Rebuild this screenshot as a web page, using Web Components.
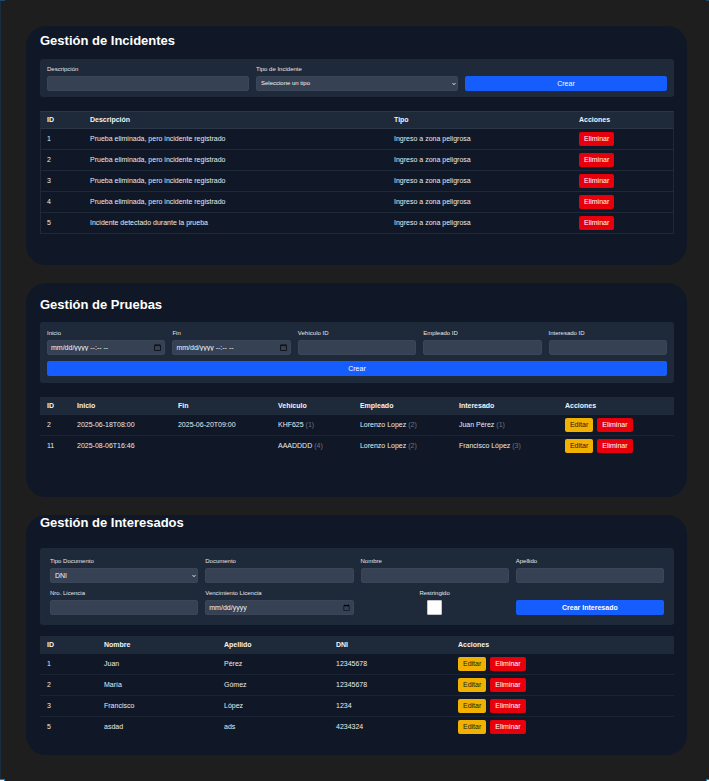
<!DOCTYPE html>
<html lang="es">
<head>
<meta charset="utf-8">
<title>Gestión</title>
<style>
  html { background: #1e1e1e; }
  body { margin: 0; font-family: "Liberation Sans", Arial, sans-serif; color: #e9ebef; font-size: 7px; }
</style>
</head>
<body>
<panel-board>
  <admin-card heading="Gestión de Incidentes" class="incidentes">
    <incident-form slot="form"></incident-form>
    <data-grid kind="incidentes"></data-grid>
  </admin-card>
  <admin-card heading="Gestión de Pruebas" class="pruebas">
    <test-form slot="form"></test-form>
    <data-grid kind="pruebas"></data-grid>
  </admin-card>
  <admin-card heading="Gestión de Interesados" class="interesados">
    <person-form slot="form"></person-form>
    <data-grid kind="interesados"></data-grid>
  </admin-card>
</panel-board>

<script>
const define = (name, html, setup) => customElements.define(name, class extends HTMLElement {
  connectedCallback() {
    if (this.shadowRoot) return;
    this.attachShadow({ mode: 'open' }).innerHTML = html;
    if (setup) setup(this, this.shadowRoot);
  }
});

/* Page frame with selection handles in its corners */
define('panel-board', `
  <style>
    :host { display: flex; flex-direction: column; gap: 18px; position: relative; box-sizing: border-box;
      min-height: 100vh; padding: 26px 22px 26px 25px; border-left: 1px solid #1b2d3d; border-bottom: 1px solid #17171a; }
    i { position: absolute; box-sizing: border-box; width: 5px; }
    .tl { left: -1px; top: 0; height: 1px; background: #1c4a6b; }
    .tr { right: 0; top: 0; width: 3px; height: 1px; background: #1c4a6b; }
    .bl, .br { bottom: -1px; height: 3px; background: #e8f2fa; border: 1px solid #1b7fc4; border-bottom: 0; border-left: 0; }
    .bl { left: -1px; }
    .br { right: 0; width: 3px; border: 1px solid #1b7fc4; border-bottom: 0; border-right: 0; }
  </style>
  <slot></slot><i class="tl"></i><i class="tr"></i><i class="bl"></i><i class="br"></i>`);

define('admin-card', `
  <style>
    :host { display: block; background: #101828; border-radius: 20px; padding: 0 13px 0 14px; --gap: 10px; --after: 14px; }
    :host(.incidentes) { padding-top: 7px; padding-bottom: 31px; }
    :host(.pruebas) { padding-top: 14px; padding-bottom: 40px; --gap: 9px; }
    :host(.interesados) { padding-top: 0; padding-bottom: 17px; --gap: 17px; --after: 11px; }
    h1 { margin: 0 0 var(--gap); font-size: 13px; line-height: 16px; font-weight: 700; color: #fff; }
    .form { margin-bottom: var(--after); }
  </style>
  <h1></h1><div class="form"><slot name="form"></slot></div><slot></slot>`,
  (host, root) => { root.querySelector('h1').textContent = host.getAttribute('heading'); });

const formCss = `
  :host { display: block; }
  form { display: grid; gap: 6px 7px; background: #1e2939; border-radius: 3px; align-items: end; }
`;

/* Labelled control: text, select, date, datetime or checkbox */
define('form-field', '', (host, root) => {
  const type = host.getAttribute('type') || 'text';
  let control = `<input id="c" type="${type}">`;
  if (type === 'select') control = `<span class="pick"><select id="c"><option>${host.getAttribute('option')}</option></select>
    <svg class="arrow" viewBox="0 0 8 8"><path d="M2.5 3 4 4.8 5.500 3"/></svg></span>`;
  if (type === 'datetime') control = `<span class="pick"><input id="c" type="text" placeholder="mm/dd/yyyy --:-- --">
    <button type="button" aria-label="Abrir calendario"><svg viewBox="0 0 7 7"><path d="M.5 1h6v5.500h-6zM.5 1.600h6M2 0v1M5 0v1"/></svg></button></span>`;
  root.innerHTML = `
    <style>
      :host { display: flex; flex-direction: column; gap: 2px; min-width: 0; }
      :host([type=checkbox]) { align-items: center; }
      label { font-size: 6px; line-height: 9px; color: #e5e7eb; }
      input, select { display: block; box-sizing: border-box; width: 100%; height: 15px; margin: 0; padding: 0 3px;
        font: 7px/13px "Liberation Sans", Arial, sans-serif; color: #f3f4f6; background: #364153;
        border: 1px solid #3b4759; border-radius: 2px; }
      input::placeholder { color: #f3f4f6; opacity: 1; }
      select { appearance: none; padding: 0 4px; }
      :host([compact]) select { font-size: 6px; }
      .pick { position: relative; display: block; }
      .arrow { position: absolute; right: 0; top: 4px; width: 8px; height: 8px; fill: none; stroke: #d1d5dc; pointer-events: none; }
      button { position: absolute; right: 4px; top: 4px; width: 7px; height: 7px; padding: 0; border: 0; background: none; }
      button svg { display: block; width: 7px; height: 7px; fill: none; stroke: #10151d; }
      input[type=checkbox] { appearance: none; width: 15px; background: #fff; border: 1px solid #c3c7cd; border-radius: 1px; }
      input::-webkit-calendar-picker-indicator { width: 7px; height: 7px; padding: 0; margin: 0; }
      input::-webkit-datetime-edit, input::-webkit-datetime-edit-fields-wrapper,
      input::-webkit-datetime-edit-month-field, input::-webkit-datetime-edit-day-field,
      input::-webkit-datetime-edit-year-field { padding: 0; }
    </style>
    <label for="c">${host.getAttribute('label')}</label>${control}`;
});

define('action-button', `
  <style>
    :host { display: block; }
    button { box-sizing: border-box; display: block; width: 100%; height: 14px; margin: 0; padding: 0 5px; border: 0; border-radius: 2px;
      font: 7px/14px "Liberation Sans", Arial, sans-serif; color: #fff; background: #155dfc; cursor: pointer; }
    :host([tone=delete]) button { background: #e7000b; }
    :host([tone=edit]) button { background: #f0b100; color: #1e1a08; }
    :host([tone=submit]) button { height: 15px; }
    :host([strong]) button { font-weight: 700; }
  </style>
  <button type="button"><slot></slot></button>`);

define('incident-form', `
  <style>${formCss} form { padding: 6px 7px; grid-template-columns: repeat(3, 1fr); }</style>
  <form>
    <form-field label="Descripción"></form-field>
    <form-field label="Tipo de Incidente" type="select" option="Seleccione un tipo" compact></form-field>
    <action-button tone="submit">Crear</action-button>
  </form>`);

define('test-form', `
  <style>${formCss} form { padding: 7px; grid-template-columns: repeat(5, 1fr); } action-button { grid-column: 1 / -1; }</style>
  <form>
    <form-field label="Inicio" type="datetime"></form-field>
    <form-field label="Fin" type="datetime"></form-field>
    <form-field label="Vehículo ID"></form-field>
    <form-field label="Empleado ID"></form-field>
    <form-field label="Interesado ID"></form-field>
    <action-button tone="submit">Crear</action-button>
  </form>`);

define('person-form', `
  <style>${formCss} form { padding: 9px 10px 10px; grid-template-columns: repeat(4, 1fr); }</style>
  <form>
    <form-field label="Tipo Documento" type="select" option="DNI"></form-field>
    <form-field label="Documento"></form-field>
    <form-field label="Nombre"></form-field>
    <form-field label="Apellido"></form-field>
    <form-field label="Nro. Licencia"></form-field>
    <form-field label="Vencimiento Licencia" type="date"></form-field>
    <form-field label="Restringido" type="checkbox"></form-field>
    <action-button tone="submit" strong>Crear Interesado</action-button>
  </form>`);

const zone = 'Ingreso a zona peligrosa', removed = 'Prueba eliminada, pero incidente registrado';
const grids = {
  incidentes: {
    widths: [43, 304, 185, 102], heads: ['ID', 'Descripción', 'Tipo', 'Acciones'], edit: false,
    rows: [[1, removed, zone], [2, removed, zone], [3, removed, zone], [4, removed, zone],
           [5, 'Incidente detectado durante la prueba', zone]]
  },
  pruebas: {
    widths: [30, 101, 100, 82, 99, 106, 116], edit: true,
    heads: ['ID', 'Inicio', 'Fin', 'Vehículo', 'Empleado', 'Interesado', 'Acciones'],
    rows: [[2, '2025-06-18T08:00', '2025-06-20T09:00', 'KHF625 (1)', 'Lorenzo Lopez (2)', 'Juan Pérez (1)'],
           [11, '2025-08-06T16:46', '', 'AAADDDD (4)', 'Lorenzo Lopez (2)', 'Francisco López (3)']]
  },
  interesados: {
    widths: [57, 120, 112, 122, 223], heads: ['ID', 'Nombre', 'Apellido', 'DNI', 'Acciones'], edit: true,
    rows: [[1, 'Juan', 'Pérez', '12345678'], [2, 'María', 'Gómez', '12345678'],
           [3, 'Francisco', 'López', '1234'], [5, 'asdad', 'ads', '4234324']]
  }
};

define('data-grid', '', (host, root) => {
  const g = grids[host.getAttribute('kind')];
  const total = g.widths.reduce((a, b) => a + b);
  const cell = t => String(t).replace(/\(\d+\)$/, '<small>$&</small>');
  root.innerHTML = `
    <style>
      :host { display: block; }
      table { width: 100%; table-layout: fixed; border-spacing: 0; font-size: 7px; line-height: 10px; }
      th, td { box-sizing: border-box; padding: 0 7px; text-align: left; vertical-align: middle; white-space: nowrap; }
      th { height: 18px; background: #1e2939; font-weight: 700; color: #f3f4f6; }
      td { height: 21px; border-bottom: 1px solid #1a2433; }
      small { font-size: inherit; color: #6a7282; }
      .actions { display: flex; gap: 4px; }
      :host(:not([kind=incidentes])) tr:last-child td { border-bottom-color: transparent; }
      :host([kind=incidentes]) th { border-top: 1px solid #2a3545; border-bottom: 1px solid #2a3545; }
      :host([kind=incidentes]) td { border-bottom-color: #1e2939; }
      :host([kind=incidentes]) tr > :first-child { border-left: 1px solid #1e2939; padding-left: 6px; }
      :host([kind=incidentes]) tr > :last-child { border-right: 1px solid #1e2939; }
    </style>
    <table>
      <colgroup>${g.widths.map(w => `<col style="width:${w / total * 100}%">`).join('')}</colgroup>
      <thead><tr>${g.heads.map(h => `<th scope="col">${h}</th>`).join('')}</tr></thead>
      <tbody>${g.rows.map(r => `<tr>${r.map(c => `<td>${cell(c)}</td>`).join('')}<td><div class="actions">${
        g.edit ? '<action-button tone="edit">Editar</action-button>' : ''
      }<action-button tone="delete">Eliminar</action-button></div></td></tr>`).join('')}</tbody>
    </table>`;
});
</script>
</body>
</html>
